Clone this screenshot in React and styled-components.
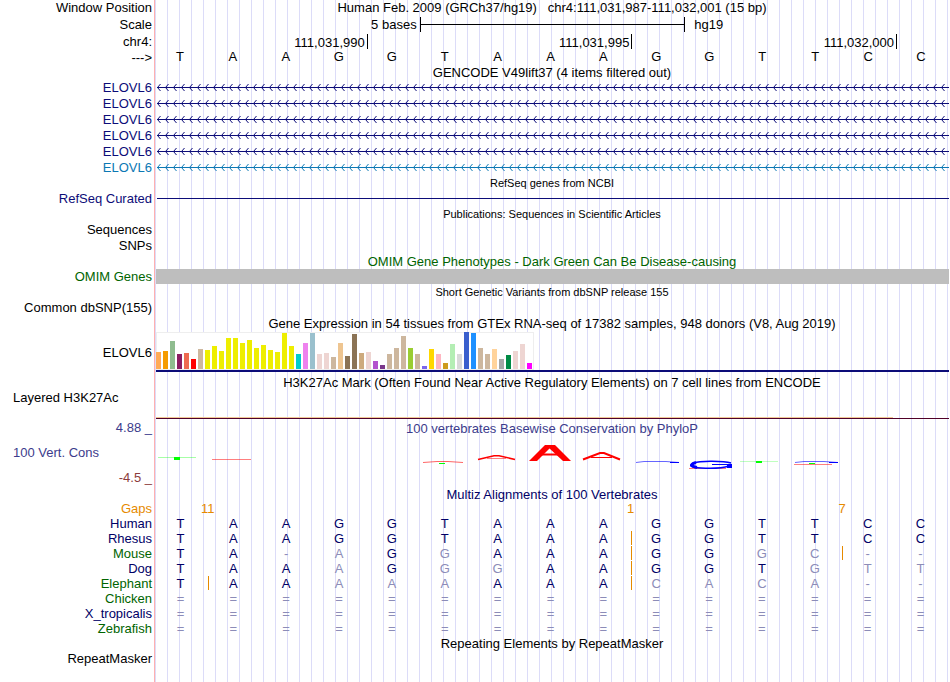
import React from 'react';
import styled, { createGlobalStyle } from 'styled-components';

const NAVY = '#0c0c78';
const DEEP = '#000066';
const GREEN = '#006400';
const ORANGE = '#e68a00';
const VIOLET = '#3c3c8c';
const MAROON = '#8c3c3c';

const REFERENCE = 'TAAGGTAAAGGTTCC';

const GENES = [NAVY, NAVY, NAVY, NAVY, NAVY, '#0c78b4'];

// one entry per tissue: [color, height]
const TISSUES = [
  ['#ffaa56', 17], ['#f59b00', 18], ['#8fbc8f', 28], ['#8b1c62', 15], ['#ee6a50', 16],
  ['#ff0000', 10], ['#cdb79e', 20], ['#eeee00', 19], ['#eeee00', 23], ['#eeee00', 18],
  ['#eeee00', 31], ['#eeee00', 31], ['#eeee00', 26], ['#eeee00', 29], ['#eeee00', 21],
  ['#eeee00', 24], ['#eeee00', 19], ['#eeee00', 17], ['#eeee00', 36], ['#eeee00', 23],
  ['#00cdcd', 15], ['#ee82ee', 26], ['#9ac0cd', 36], ['#eed5d2', 15], ['#eed5d2', 16],
  ['#cdb79e', 12], ['#eec591', 26], ['#8b7355', 13], ['#8b7355', 35], ['#cdaa7d', 16],
  ['#eed5d2', 17], ['#b452cd', 8], ['#7a378b', 4], ['#cdb79e', 15], ['#cdb79e', 21],
  ['#cdb79e', 33], ['#9acd32', 21], ['#cdb79e', 15], ['#7a67ee', 3], ['#ffd700', 20],
  ['#ffb6c1', 15], ['#cd9b1d', 6], ['#b4eeb4', 25], ['#d9d9d9', 15], ['#3a5fcd', 37],
  ['#1e90ff', 36], ['#cdb79e', 21], ['#cdb79e', 15], ['#ffd39b', 20], ['#a6a6a6', 10],
  ['#008b45', 14], ['#eed5d2', 18], ['#eed5d2', 25], ['#ff00ff', 6],
];

// lower case letters differ from the human base, marks are insert positions
const SPECIES = [
  { name: 'Human', color: DEEP, bases: 'TAAGGTAAAGGTTCC', marks: [] },
  { name: 'Rhesus', color: DEEP, bases: 'TAAGGTAAAGGTTCC', marks: [8] },
  { name: 'Mouse', color: GREEN, bases: 'TA-aGgAAAGGgc--', marks: [8, 12] },
  { name: 'Dog', color: DEEP, bases: 'TAAaGggAAGGTgtt', marks: [8] },
  { name: 'Elephant', color: GREEN, bases: 'TAAaaaAAAcaca--', marks: [0, 8] },
  { name: 'Chicken', color: GREEN, bases: '===============', marks: [] },
  { name: 'X_tropicalis', color: DEEP, bases: '===============', marks: [] },
  { name: 'Zebrafish', color: GREEN, bases: '===============', marks: [] },
];

const GAPS = { 0: '11', 8: '1', 12: '7' };

//Components
function Track({ label, color, height, children }) {
  return (
    <Row $height={height}>
      <Label $color={color}>{label}</Label>
      <Data>{children}</Data>
    </Row>
  );
}

function Heading({ label, color, height = 15, small, children }) {
  return (
    <Row $height={height}>
      <Label $color={color}>{label}</Label>
      <Title $color={color} $small={small}>{children}</Title>
    </Row>
  );
}

function Intron({ color, id }) {
  return (
    <Drawing height="16" aria-hidden="true">
      <defs>
        <pattern id={id} width="8" height="16" patternUnits="userSpaceOnUse">
          <path d="M4.5 4L1.5 7.5L4.5 11" fill="none" stroke={color} />
        </pattern>
      </defs>
      <rect width="100%" height="16" fill={`url(#${id})`} />
      <rect x="1" y="7" width="100%" height="1" fill={color} />
    </Drawing>
  );
}

function Expression() {
  return (
    <svg width="378" height="38" shapeRendering="crispEdges" aria-hidden="true">
      <rect x="0.5" y="0.5" width="377" height="37" fill="#fff" stroke="#eee" />
      {TISSUES.map(([color, height], i) => (
        <rect key={i} x={i * 7} y={37 - height} width="5" height={height} fill={color} />
      ))}
    </svg>
  );
}

function Conservation() {
  return (
    <Drawing height="34" viewBox="0 0 793 34" preserveAspectRatio="none" aria-hidden="true">
      <g fill="#0f0">
        <rect x="2" y="21" width="38" height="1" opacity="0.35" />
        <rect x="18" y="21" width="6" height="3" />
        <rect x="283" y="27" width="6" height="1" />
        <rect x="584" y="25" width="38" height="1" opacity="0.25" />
        <rect x="600" y="25" width="6" height="2" />
        <rect x="653" y="27" width="6" height="1" />
      </g>
      <g fill="none" stroke="#f00">
        <path d="M56 23.5H95" opacity="0.5" />
        <path d="M267 26.5L281 25.5H292L307 26.5" opacity="0.6" />
        <path d="M322 23.5L338 19.8H343L359 23.5" strokeWidth="1.5" />
        <path d="M331 22.5H350" opacity="0.5" />
        <path d="M384 18.5H403" strokeWidth="2" />
        <path d="M427 23.5L444 17H448L464 23.5" strokeWidth="2" />
        <path d="M435 21.5H456" />
        <path d="M533 32.5H570" opacity="0.5" />
        <path d="M638 28.5H676" opacity="0.5" />
      </g>
      <g fill="#f00">
        <path d="M373 25L389 9H394V12L381 25Z" />
        <path d="M415 25L399 9H393V12L407 25Z" />
      </g>
      <g fill="none" stroke="#00f">
        <path d="M480 26.5L488 25.5H510L523 26.5" opacity="0.6" />
        <path d="M514 26.5H523" />
        <path d="M575 27C568 25 544 24.5 538 27C532 29 534 31.5 545 32C554 32.5 567 32 573 30" strokeWidth="1.5" />
        <path d="M540 26.5C534 28 535 30.5 541 31.5" strokeWidth="3" />
        <path d="M556 28.5H576" />
        <path d="M571 30.5H576" strokeWidth="3" />
        <path d="M639 26.5L648 25.5H668L682 26.5" opacity="0.6" />
        <path d="M673 26.5H682" />
      </g>
    </Drawing>
  );
}

function Alignment() {
  return (
    <Table aria-label="Multiz Alignments">
      <colgroup>
        <LabelCol />
        {[...REFERENCE].map((_, i) => <col key={i} />)}
      </colgroup>
      <tbody>
        <tr>
          <Name scope="row" $color={ORANGE}>Gaps</Name>
          {[...REFERENCE].map((_, i) => (
            <GapCell key={i}>{GAPS[i] && <Gap>{GAPS[i]}</Gap>}</GapCell>
          ))}
        </tr>
        {SPECIES.map(({ name, color, bases, marks }) => (
          <tr key={name}>
            <Name scope="row" $color={color}>{name}</Name>
            {[...bases].map((base, i) => (
              <Cell key={i} $same={base === REFERENCE[i]} $insert={marks.includes(i)}>
                {base.toUpperCase()}
              </Cell>
            ))}
          </tr>
        ))}
      </tbody>
    </Table>
  );
}

export default function App() {
  return (
    <>
      <GlobalStyle />
      <Page>
        <Heading label="Window Position" height={16}>
          Human Feb. 2009 (GRCh37/hg19){'\u00a0\u00a0 '}chr4:111,031,987-111,032,001 (15 bp)
        </Heading>
        <Track label="Scale" height={18}>
          <Scale>
            <ScaleText $right>5 bases</ScaleText>
            <Ruler />
            <ScaleText>hg19</ScaleText>
          </Scale>
        </Track>
        <Track label="chr4:" height={17}>
          <Positions>
            <Tick>111,031,990</Tick>
            <Tick>111,031,995</Tick>
            <Tick>111,032,000</Tick>
          </Positions>
        </Track>
        <Track label="--->" height={14}>
          <Bases>
            {[...REFERENCE].map((base, i) => <Base key={i}>{base}</Base>)}
          </Bases>
        </Track>

        <Heading>GENCODE V49lift37 (4 items filtered out)</Heading>
        {GENES.map((color, i) => (
          <Track key={i} label="ELOVL6" color={color} height={16}>
            <Intron color={color} id={`intron-${i}`} />
          </Track>
        ))}

        <Heading small>RefSeq genes from NCBI</Heading>
        <Track label="RefSeq Curated" color={NAVY} height={16}>
          <Line $color={NAVY} />
        </Track>

        <Heading small>Publications: Sequences in Scientific Articles</Heading>
        <Track label="Sequences" height={16} />
        <Track label="SNPs" height={16} />

        <Heading color={GREEN}>OMIM Gene Phenotypes - Dark Green Can Be Disease-causing</Heading>
        <Track label="OMIM Genes" color={GREEN} height={16}>
          <Block />
        </Track>

        <Heading small>Short Genetic Variants from dbSNP release 155</Heading>
        <Track label="Common dbSNP(155)" height={16} />

        <Heading height={16}>
          Gene Expression in 54 tissues from GTEx RNA-seq of 17382 samples, 948 donors (V8, Aug 2019)
        </Heading>
        <Track label="ELOVL6" height={43}>
          <Gtex>
            <Expression />
          </Gtex>
        </Track>

        <Heading>
          H3K27Ac Mark (Often Found Near Active Regulatory Elements) on 7 cell lines from ENCODE
        </Heading>
        <Row $height={31}>
          <SideLabel $top>Layered H3K27Ac</SideLabel>
          <Data>
            <Signal />
          </Data>
        </Row>

        <Heading label="4.88 _" color={VIOLET}>
          100 vertebrates Basewise Conservation by PhyloP
        </Heading>
        <Row $height={34}>
          <SideLabel $color={VIOLET}>100 Vert. Cons</SideLabel>
          <Data>
            <Conservation />
          </Data>
        </Row>
        <Track label="-4.5 _" color={MAROON} height={17} />

        <Heading color={DEEP} height={14}>Multiz Alignments of 100 Vertebrates</Heading>
        <Alignment />

        <Heading height={16}>Repeating Elements by RepeatMasker</Heading>
        <Track label="RepeatMasker" height={15} />
      </Page>
    </>
  );
}

//Styling Of Components

const GlobalStyle = createGlobalStyle`
  body {
    margin: 0;
    background: #fff;
  }
`;

const Page = styled.main`
  box-sizing: border-box;
  min-height: 100vh;
  margin-right: 1px;
  font-family: 'Liberation Sans', Arial, sans-serif;
  font-size: 13px;
  line-height: 15px;
  color: #000;
  background:
    linear-gradient(to right, #fff 154px, #ffb0b0 154px, #ffb0b0 155px, transparent 155px),
    repeating-linear-gradient(to right, transparent 0, transparent 11px, #dcdcf8 11px, #dcdcf8 12px);
`;

const Row = styled.section`
  display: grid;
  grid-template-columns: 155px minmax(0, 1fr);
  grid-template-rows: 100%;
  height: ${(p) => p.$height}px;
`;

const Label = styled.div`
  align-self: center;
  padding: 0 3px 2px 0;
  text-align: right;
  white-space: nowrap;
  color: ${(p) => p.$color || '#000'};
`;

const SideLabel = styled.div`
  align-self: ${(p) => (p.$top ? 'start' : 'center')};
  padding: 0 0 2px 13px;
  white-space: nowrap;
  color: ${(p) => p.$color || '#000'};
`;

const Title = styled.h2`
  margin: 0;
  font-size: ${(p) => (p.$small ? 11 : 13)}px;
  font-weight: normal;
  text-align: center;
  white-space: nowrap;
  color: ${(p) => p.$color || '#000'};
`;

const Data = styled.div`
  min-width: 0;
  padding-left: 1px;
`;

const Drawing = styled.svg`
  display: block;
  width: 100%;
`;

const Scale = styled.div`
  display: grid;
  grid-template-columns: repeat(3, 1fr);
  margin-left: -1px;
  padding-top: 1px;
`;

const ScaleText = styled.span`
  padding: ${(p) => (p.$right ? '0 3px 0 0' : '0 0 0 10px')};
  text-align: ${(p) => (p.$right ? 'right' : 'left')};
`;

const Ruler = styled.span`
  height: 15px;
  margin-right: -1px;
  border: solid #000;
  border-width: 0 1px;
  background: linear-gradient(#000, #000) center / 100% 1px no-repeat;
`;

const Positions = styled.div`
  display: grid;
  grid-template-columns: 4fr 5fr 5fr 1fr;
  margin-right: -1px;
`;

const Tick = styled.span`
  height: 15px;
  padding-right: 2px;
  border-right: 1px solid #000;
  text-align: right;
  line-height: 17px;
`;

const Bases = styled.div`
  display: grid;
  grid-template-columns: repeat(15, 1fr);
  margin-left: -1px;
`;

const Base = styled.span`
  padding-right: 3px;
  text-align: center;
  line-height: 11px;
`;

const Line = styled.div`
  height: 7px;
  margin-left: 1px;
  border-bottom: 1px solid ${(p) => p.$color};
`;

const Block = styled.div`
  height: 15px;
  background: #bebebe;
`;

const Gtex = styled.div`
  height: 38px;
  border-bottom: 2px solid ${NAVY};
`;

const Signal = styled.div`
  height: 29px;
  background:
    linear-gradient(#500028, #500028) bottom / 100% 1px no-repeat,
    linear-gradient(#f0c896, #f0c896) 0 27px / 93% 1px no-repeat;
`;

const Table = styled.table`
  width: 100%;
  table-layout: fixed;
  border-collapse: collapse;
`;

const LabelCol = styled.col`
  width: 156px;
`;

const Name = styled.th`
  height: 15px;
  padding: 0 4px 0 0;
  font-weight: normal;
  text-align: right;
  color: ${(p) => p.$color};
`;

const Cell = styled.td`
  padding: 0 4px 0 0;
  text-align: center;
  color: ${(p) => (p.$same ? DEEP : '#8c8cb8')};
  background: ${(p) => (p.$insert ? `linear-gradient(${ORANGE}, ${ORANGE}) right top / 1px 14px no-repeat` : 'none')};
`;

const GapCell = styled.td`
  padding: 0;
  text-align: right;
  color: ${ORANGE};
`;

const Gap = styled.span`
  display: block;
  width: 24px;
  margin: 0 -11px 0 auto;
  text-align: center;
`;
